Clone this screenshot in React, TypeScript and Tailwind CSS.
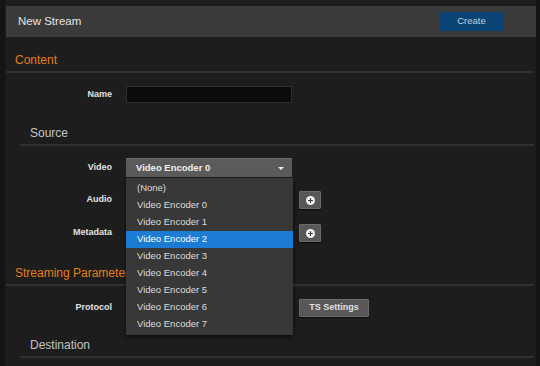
import { Plus } from 'lucide-react';

const FONT = { fontFamily: '"Liberation Sans", Arial, sans-serif' };

const ENCODERS = [
  '(None)',
  'Video Encoder 0',
  'Video Encoder 1',
  'Video Encoder 2',
  'Video Encoder 3',
  'Video Encoder 4',
  'Video Encoder 5',
  'Video Encoder 6',
  'Video Encoder 7',
];

function Heading({ text, sub }: { text: string; sub?: boolean }) {
  return (
    <div className={sub ? 'ml-[14px]' : ''}>
      <div
        className={`leading-[16px] text-[12px] pb-[3px] ${
          sub ? 'pl-[10px] text-[#c4c4c4]' : 'pl-[9px] text-[#e27f1c]'
        }`}
      >
        {text}
      </div>
      <div className="h-[2px] bg-[#313131] mr-[2px]" />
    </div>
  );
}

function Label({ text }: { text: string }) {
  return (
    <div className="w-[106px] text-right text-[9px] font-bold text-[#e2e2e2] shrink-0">
      {text}
    </div>
  );
}

function PlusButton() {
  return (
    <button className="ml-[7px] w-[22px] h-[18px] bg-[#575757] border border-[#6a6a6a] rounded-[1px] flex items-center justify-center shadow-[0_1px_1px_rgba(0,0,0,0.6)]">
      <span className="w-[9px] h-[9px] rounded-full bg-[#f2f2f2] flex items-center justify-center">
        <Plus className="w-[7px] h-[7px] text-[#3a3a3a]" strokeWidth={4} />
      </span>
    </button>
  );
}

export default function App() {
  return (
    <div
      className="w-[540px] h-[366px] overflow-hidden bg-[#1d1d1d] border-l-[5px] border-r-[4px] border-[#141414] pt-[6px] pl-[1px]"
      style={FONT}
    >
      {/* Header */}
      <div className="h-[31px] bg-[#3a3a3a] flex items-center justify-between pl-[12px] pr-[32px]">
        <span className="text-[11.5px] text-[#e4e4e4]">New Stream</span>
        <button className="w-[65px] h-[19px] bg-[#0a4474] text-[9.5px] text-[#c4ced8]">
          Create
        </button>
      </div>

      <div className="relative">
        {/* Content */}
        <div className="pt-[15px]">
          <Heading text="Content" />
        </div>

        <div className="mt-[13px] h-[17px] flex items-center">
          <Label text="Name" />
          <div className="ml-[14px] w-[166px] h-[17px] bg-[#0c0c0c] border border-[#2f2f2f]" />
        </div>

        <div className="mt-[22px]">
          <Heading text="Source" sub />
        </div>

        <div className="mt-[12px] h-[19px] flex items-center">
          <Label text="Video" />
          <div className="ml-[14px] w-[166px] h-[19px] bg-[#5b5b5b] border-t border-[#6c6c6c] flex items-center justify-between pl-[10px] pr-[8px]">
            <span className="text-[9.5px] font-bold text-[#f0f0f0]">Video Encoder 0</span>
            <span className="w-0 h-0 border-l-[3px] border-r-[3px] border-t-[3px] border-l-transparent border-r-transparent border-t-[#f0f0f0]" />
          </div>
        </div>

        <div className="mt-[14px] h-[18px] flex items-center">
          <Label text="Audio" />
          <div className="ml-[14px] w-[166px] h-[18px]" />
          <PlusButton />
        </div>

        <div className="mt-[15px] h-[18px] flex items-center">
          <Label text="Metadata" />
          <div className="ml-[14px] w-[166px] h-[18px]" />
          <PlusButton />
        </div>

        <div className="mt-[23px]">
          <Heading text="Streaming Parameters" />
        </div>

        <div className="mt-[13px] h-[18px] flex items-center">
          <Label text="Protocol" />
          <div className="ml-[14px] w-[166px] h-[18px]" />
          <button className="ml-[7px] w-[70px] h-[18px] bg-[#575757] border border-[#6a6a6a] rounded-[1px] text-[9px] font-bold text-[#e0e0e0] shadow-[0_1px_1px_rgba(0,0,0,0.6)]">
            TS Settings
          </button>
        </div>

        <div className="mt-[20px]">
          <Heading text="Destination" sub />
        </div>

        {/* Open dropdown list */}
        <div className="absolute left-[120px] top-[141px] w-[167px] bg-[#383838] py-[2px] shadow-[0_2px_4px_rgba(0,0,0,0.6)]">
          {ENCODERS.map((item) => (
            <div
              key={item}
              className={`h-[17px] flex items-center pl-[11px] text-[9.5px] ${
                item === 'Video Encoder 2' ? 'bg-[#1c7bd2] text-white' : 'text-[#dcdcdc]'
              }`}
            >
              {item}
            </div>
          ))}
        </div>
      </div>
    </div>
  );
}
